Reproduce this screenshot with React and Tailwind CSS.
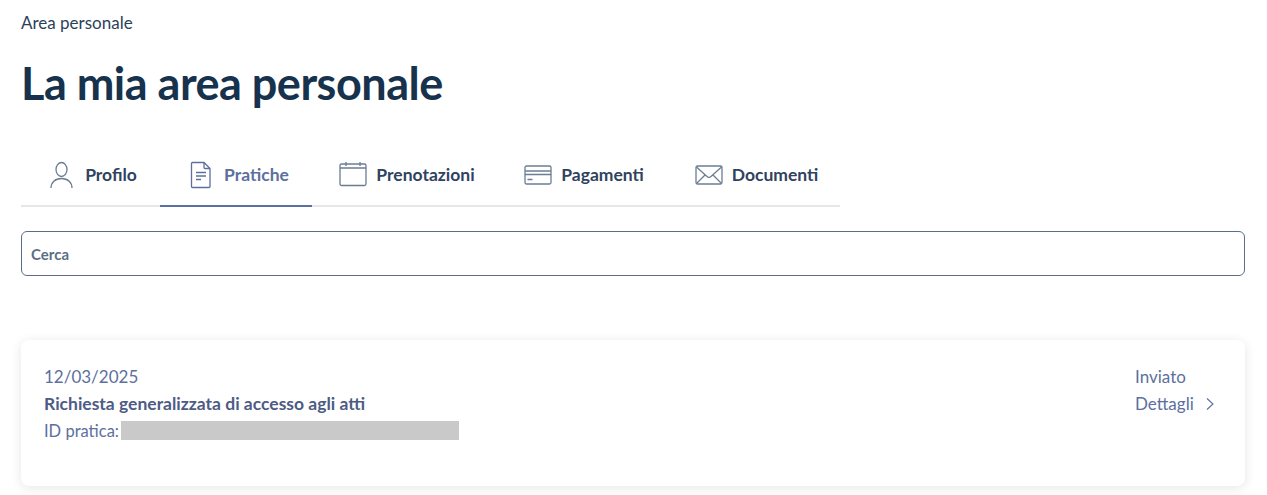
const tabs = [
    { label: "Profilo", icon: UserIcon, tabClass: "w-[139px] pl-[4px]" },
    { label: "Pratiche", icon: FileIcon, tabClass: "w-[152px] pl-[4px]", active: true },
    { label: "Prenotazioni", icon: CalendarIcon, tabClass: "w-[186px] pl-[4px]" },
    { label: "Pagamenti", icon: CardIcon, tabClass: "w-[171px] pl-[1px]" },
    { label: "Documenti", icon: MailIcon, tabClass: "w-[171px] pl-[4px]" },
];

function UserIcon({ className }) {
    return (
        <svg viewBox="0 0 28 28" fill="none" stroke="currentColor" strokeWidth="1.3" className={className}>
            <ellipse cx="13.5" cy="8.5" rx="5.5" ry="7" />
            <path d="M3 27c0-5.5 4-9.5 10.5-9.5S24 21.5 24 27" />
        </svg>
    );
}

function FileIcon({ className }) {
    return (
        <svg viewBox="0 0 28 28" fill="none" stroke="currentColor" strokeWidth="1.3" className={className}>
            <path d="M5.5 1.5h11.5l6 6v18a1 1 0 0 1-1 1h-16.5a1 1 0 0 1-1-1v-23a1 1 0 0 1 1-1z" />
            <path d="M17 1.5v5a1 1 0 0 0 1 1h5" />
            <path d="M9 11.5h10M9 15h10M9 18.5h5" />
        </svg>
    );
}

function CalendarIcon({ className }) {
    return (
        <svg viewBox="0 0 28 28" fill="none" stroke="currentColor" strokeWidth="1.3" className={className}>
            <rect x="1" y="3" width="26" height="21.5" rx="1.5" />
            <path d="M1 7h26M7 1v4M21 1v4" />
        </svg>
    );
}

function CardIcon({ className }) {
    return (
        <svg viewBox="0 0 28 28" fill="none" stroke="currentColor" strokeWidth="1.3" className={className}>
            <rect x="1" y="5" width="26" height="18" rx="1.5" />
            <path d="M1 10h26M1 13.5h26M3.5 18.5h5" />
        </svg>
    );
}

function MailIcon({ className }) {
    return (
        <svg viewBox="0 0 28 28" fill="none" stroke="currentColor" strokeWidth="1.3" className={className}>
            <rect x="1" y="5" width="26" height="18" rx="1.5" />
            <path d="M1.5 6l10.5 9.5c1.2 1 2.8 1 4 0L26.5 6M1.5 22.5l8.5-8.5M26.5 22.5l-8.5-8.5" />
        </svg>
    );
}

export default function App() {
    return (
        <div className="min-h-[495px] overflow-hidden bg-white pl-[21px] pr-[22px] pt-[12px] font-['Lato','Liberation_Sans',sans-serif]">
            <div className="text-[17px] leading-[22px] text-[#2b3f5c]">Area personale</div>

            <h1 className="mt-[22px] text-[45px] font-bold leading-[54px] tracking-[-0.5px] text-[#17324d]">
                La mia area personale
            </h1>

            {/* TABS */}
            <div className="mt-[34px] flex w-[819px] border-b-2 border-[#e6e6e6]">
                {tabs.map((t) => (
                    <div
                        key={t.label}
                        className={`${t.tabClass} -mb-[2px] flex h-[63px] items-center justify-center gap-[9px] border-b-2 ${
                            t.active ? "border-[#5c6f9e] text-[#5c6f9e]" : "border-transparent text-[#2f4260]"
                        }`}
                    >
                        <t.icon className={`h-[28px] w-[28px] ${t.active ? "text-[#5c6f9e]" : "text-[#6b7d92]"}`} />
                        <span className="mt-[2px] text-[17.5px] font-bold">{t.label}</span>
                    </div>
                ))}
            </div>

            {/* SEARCH */}
            <div className="mt-[24px] flex h-[45px] items-center rounded-[6px] border border-[#5a6f87] px-[9px]">
                <span className="mt-[2px] text-[15px] font-bold text-[#5a6f87]">Cerca</span>
            </div>

            {/* CARD */}
            <div className="mt-[64px] flex h-[146px] justify-between rounded-[8px] bg-white px-[23px] pt-[23px] shadow-[0_2px_12px_rgba(0,0,0,0.1)]">
                <div>
                    <div className="text-[17px] leading-[27px] text-[#5c6f9e]">12/03/2025</div>
                    <div className="text-[17.5px] font-bold leading-[27px] text-[#4d5b85]">
                        Richiesta generalizzata di accesso agli atti
                    </div>
                    <div className="flex items-center text-[16.5px] text-[#5c6f9e]">
                        <span className="mt-[2px] leading-[25px]">ID pratica:</span>
                        <span className="ml-[2px] h-[19px] w-[338px] bg-[#c9c9c9]" />
                    </div>
                </div>
                <div className="w-[87px]">
                    <div className="text-[17px] leading-[27px] text-[#5c6f9e]">Inviato</div>
                    <div className="flex items-center text-[17px] leading-[27px] text-[#5c6f9e]">
                        Dettagli
                        <svg viewBox="0 0 10 14" fill="none" stroke="currentColor" strokeWidth="1.1" className="ml-[11px] h-[14px] w-[10px]">
                            <path d="M2 1.5l6 5.5-6 5.5" />
                        </svg>
                    </div>
                </div>
            </div>
        </div>
    );
}
